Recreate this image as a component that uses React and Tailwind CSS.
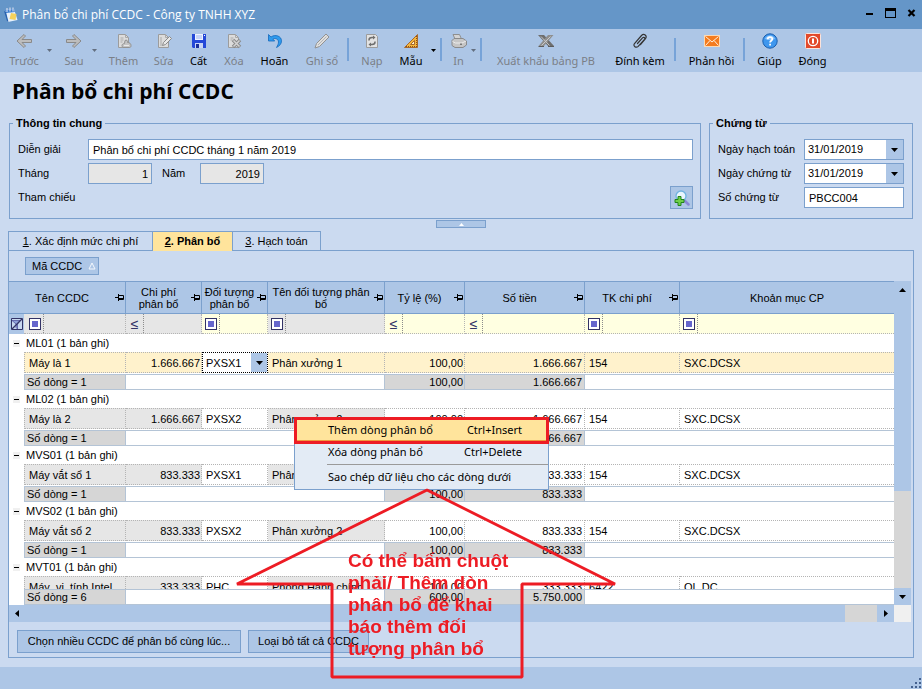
import { Fragment } from 'react';

const COLUMNS = [
  { label: 'Tên CCDC', pin: true },
  { label: 'Chi phí phân bổ', pin: true },
  { label: 'Đối tượng phân bổ', pin: true },
  { label: 'Tên đối tượng phân bổ', pin: true },
  { label: 'Tỷ lệ (%)', pin: true },
  { label: 'Số tiền', pin: true },
  { label: 'TK chi phí', pin: true },
  { label: 'Khoản mục CP', pin: false },
];

// Read-only columns have a grey filter cell, editable ones a yellow one.
const FILTERS = [
  { kind: 'text', locked: true },
  { kind: 'number', locked: true },
  { kind: 'text', locked: false },
  { kind: 'text', locked: true },
  { kind: 'number', locked: false },
  { kind: 'number', locked: false },
  { kind: 'text', locked: false },
  { kind: 'text', locked: false },
];

const GROUPS = [
  { code: 'ML01', name: 'Máy là 1', amount: '1.666.667', target: 'PXSX1', targetName: 'Phân xưởng 1', account: '154', item: 'SXC.DCSX', active: true },
  { code: 'ML02', name: 'Máy là 2', amount: '1.666.667', target: 'PXSX2', targetName: 'Phân xưởng 2', account: '154', item: 'SXC.DCSX' },
  { code: 'MVS01', name: 'Máy vắt sổ 1', amount: '833.333', target: 'PXSX1', targetName: 'Phân xưởng 1', account: '154', item: 'SXC.DCSX' },
  { code: 'MVS02', name: 'Máy vắt sổ 2', amount: '833.333', target: 'PXSX2', targetName: 'Phân xưởng 2', account: '154', item: 'SXC.DCSX' },
  { code: 'MVT01', name: 'Máy  vi  tính Intel', amount: '333.333', target: 'PHC', targetName: 'Phòng Hành chính', account: '6422', item: 'QL.DC' },
];

function Caret({ className = '' }) {
  return (
    <svg className={className} width="7" height="4" viewBox="0 0 7 4" fill="currentColor" aria-hidden="true">
      <path d="M0 0h7L3.5 4z" />
    </svg>
  );
}

function Icon({ children }) {
  return (
    <svg width="16" height="16" viewBox="0 0 16 16" fill="none" aria-hidden="true">
      {children}
    </svg>
  );
}

function PageShape() {
  return <path d="M2.5 1.5h7l3 3v10h-10z" fill="#dcdcdc" stroke="#9c9c9c" />;
}

const ICONS = {
  back: (
    <path d="M8 1.500 1 8l7 6.500 1.500-1.500L6 9.500h9.500v-3H6l3.500-3.500z" fill="#bdbdbd" stroke="#8a8a8a" strokeLinejoin="round" />
  ),
  forward: (
    <path d="M8 1.500l7 6.500-7 6.500-1.500-1.500L10 9.500H.5v-3H10L6.500 3z" fill="#bdbdbd" stroke="#8a8a8a" strokeLinejoin="round" />
  ),
  add: (
    <>
      <PageShape />
      <path d="M9.500 1.500v3h3M4.500 5h3M4.500 7h3M4.500 9h2" stroke="#aaa" />
      <path d="M9 7.500c1.500-1 3 0 2.500 2 2 0 3.500 1 3.500 3s-1 2-2 2H8c-1.500 0-2-1-2-2s1-2 2.500-2z" fill="#c4c4c4" stroke="#929292" strokeLinejoin="round" />
      <path d="M8 12.500h5" stroke="#e8e8e8" />
    </>
  ),
  edit: (
    <>
      <PageShape />
      <path d="M9.500 1.500v3h3M5 4v9" stroke="#aaa" />
      <path d="M6.500 12.500l1-3L13.500 3.500l2 2-6 6z" fill="#e8e8e8" stroke="#8a8a8a" strokeLinejoin="round" />
    </>
  ),
  save: (
    <>
      <path d="M1 1h14v14H2l-1-1z" fill="#2448d8" />
      <path d="M4 1h8v6H4z" fill="#eef2ff" />
      <path d="M5 3h6M5 5h6" stroke="#9db4f0" />
      <path d="M4 10h8v5H4z" fill="#c9d4f5" />
      <path d="M5 11h3v4H5z" fill="#1a2f9c" />
      <path d="M13 2h1v1h-1z" fill="#fff" />
    </>
  ),
  remove: (
    <>
      <PageShape />
      <path d="M9.500 1.500v3h3M4.500 5h3M4.500 7h2" stroke="#aaa" />
      <path d="M7 7l7 7M14 7l-7 7" stroke="#8a8a8a" strokeWidth="3.500" />
      <path d="M7.500 7.500l6 6M13.500 7.500l-6 6" stroke="#d4d4d4" strokeWidth="1.500" />
    </>
  ),
  undo: (
    <path
      d="M1.500 1.500v6.500h6.200L5.800 6C8.500 4.700 11.500 6.200 11.500 9c0 1.700-.8 3.500-2 5.500 3-1.500 5-3.500 5-6.700C14.500 3.300 8.500.8 4 4z"
      fill="#2f9bee"
      stroke="#1468bb"
      strokeWidth=".8"
      strokeLinejoin="round"
    />
  ),
  pencil: (
    <>
      <path d="M1 15l1.500-4.500L12 1l3 3-9.500 9.500z" fill="#dedede" stroke="#929292" strokeLinejoin="round" />
      <path d="M4 12l8.500-8.500" stroke="#b4b4b4" />
    </>
  ),
  reload: (
    <>
      <path d="M2.500 1.500h9l2 2v11h-11z" fill="#e2e2e2" stroke="#9c9c9c" />
      <path d="M5 7.500V7c0-1.500 1.300-2.500 3-2.500h1.500M11 8.500V9c0 1.500-1.300 2.500-3 2.500H6.500" stroke="#6e6e6e" strokeWidth="1.500" />
      <path d="M9 2.500l2.500 2L9 6.500zM7 9.500l-2.500 2 2.500 2z" fill="#6e6e6e" />
    </>
  ),
  template: (
    <>
      <path d="M14.500 1.500v13H1.500z" fill="#f6b63c" stroke="#a8682a" strokeLinejoin="round" />
      <path d="M11.500 7.500v4h-4z" fill="#fff3d0" stroke="#a8682a" />
      <path d="M3 13.500h11" stroke="#8a4e16" strokeDasharray="1 1" />
      <path d="M13.500 3v11" stroke="#8a4e16" strokeDasharray="1 1" />
    </>
  ),
  print: (
    <>
      <path d="M2 1.500h6.500l2 4.500H4z" fill="#d4d4d4" stroke="#8f8f8f" strokeLinejoin="round" />
      <path d="M1 7.500l2-2h9l3.500 2.500v4L12 14.500H4l-3-2z" fill="#c6c6c6" stroke="#8a8a8a" strokeLinejoin="round" />
      <path d="M1.500 8.500l3 1.500h6.500l4-2" stroke="#ececec" />
      <path d="M9 10.500h2v1.500H9z" fill="#7a7a7a" />
    </>
  ),
  excel: (
    <>
      <path d="M0 2h6l10 11h-6z" fill="#6e6e6e" />
      <path d="M10 2h5.500L6 13H.5z" fill="#8f8f8f" />
      <path d="M3 3.500l8.500 9M12.500 3.500L3.500 12.500" stroke="#c9c9c9" />
      <path d="M.5 13.500H6M10 13.500h6" stroke="#5c5c5c" />
    </>
  ),
  clip: (
    <path
      d="M5.500 10.500l5-5.700c1.300-1.300 3 .2 2 1.500l-6.300 7c-2.200 2.200-5.400-.3-3.700-2.800L9.500 2.500c2.500-2.600 6 .3 4 3.200L8.500 11.500"
      stroke="#333"
      strokeWidth="1.200"
      strokeLinecap="round"
    />
  ),
  mail: (
    <>
      <path d="M0 2h16v12H0z" fill="#fbd9b4" />
      <path d="M1 3h14v10H1z" fill="#f47b1e" />
      <path d="M1.500 3.500L8 9l6.500-5.500M1.500 12.500l4.500-5M14.500 12.500l-4.500-5" stroke="#fff0dd" />
    </>
  ),
  help: (
    <>
      <circle cx="8" cy="8" r="7.200" fill="#3f97ee" stroke="#1b5fae" />
      <path d="M3 6a5.300 5.300 0 0110 0c-3 1.500-7 1.500-10 0z" fill="#8cc4fa" />
      <path d="M5.700 6.200C5.700 3.400 10.300 3.500 10.300 6c0 1.700-2.200 1.700-2.200 3.500" stroke="#fff" strokeWidth="1.800" />
      <path d="M7.200 10.800H9v1.800H7.200z" fill="#fff" />
    </>
  ),
  power: (
    <>
      <rect x=".5" y=".5" width="15" height="15" rx="1" fill="#e2492b" stroke="#fbe3dc" />
      <circle cx="8" cy="8" r="4.700" stroke="#fff" strokeWidth="1.300" />
      <path d="M8 5.500v5" stroke="#fff" strokeWidth="2" />
    </>
  ),
};

function ToolButton({ icon, label, width, disabled }) {
  return (
    <button
      type="button"
      disabled={disabled}
      className={`flex shrink-0 flex-col items-center gap-1 whitespace-nowrap leading-4 ${width} ${
        disabled ? 'text-[#7b7f86]' : 'text-black'
      }`}
    >
      <Icon>{ICONS[icon]}</Icon>
      {label}
    </button>
  );
}

function ToolCaret({ label, disabled }) {
  return (
    <button
      type="button"
      aria-label={label}
      disabled={disabled}
      className={`w-[9px] shrink-0 self-stretch pb-1 ${disabled ? 'text-[#636f80]' : 'text-black'}`}
    >
      <svg width="5" height="3" viewBox="0 0 5 3" fill="currentColor" aria-hidden="true">
        <path d="M0 0h5L2.500 3z" />
      </svg>
    </button>
  );
}

function Separator() {
  return <div className="mr-1 mt-[5px] h-[23px] w-[2px] shrink-0 bg-[#77a3d8]" />;
}

function Toolbar() {
  return (
    <div className="flex h-[43px] shrink-0 items-start overflow-hidden bg-[#adc6e6] pl-px pt-1 font-['Noto_Sans',sans-serif] text-[11px]">
      <ToolButton icon="back" label="Trước" width="w-[46px]" disabled />
      <ToolCaret label="Chọn bản ghi trước" disabled />
      <ToolButton icon="forward" label="Sau" width="w-[36px]" disabled />
      <ToolCaret label="Chọn bản ghi sau" disabled />
      <ToolButton icon="add" label="Thêm" width="w-[45px]" disabled />
      <ToolButton icon="edit" label="Sửa" width="w-[35px]" disabled />
      <ToolButton icon="save" label="Cất" width="w-[35px]" />
      <ToolButton icon="remove" label="Xóa" width="w-[36px]" disabled />
      <ToolButton icon="undo" label="Hoãn" width="w-[45px]" />
      <ToolButton icon="pencil" label="Ghi sổ" width="w-[50px]" disabled />
      <Separator />
      <ToolButton icon="reload" label="Nạp" width="w-[38px]" disabled />
      <ToolButton icon="template" label="Mẫu" width="w-[40px]" />
      <ToolCaret label="Chọn mẫu" />
      <Separator />
      <ToolButton icon="print" label="In" width="w-[25px]" disabled />
      <ToolCaret label="Chọn mẫu in" disabled />
      <Separator />
      <ToolButton icon="excel" label="Xuất khẩu bảng PB" width="w-[120px]" disabled />
      <ToolButton icon="clip" label="Đính kèm" width="w-[68px]" />
      <Separator />
      <ToolButton icon="mail" label="Phản hồi" width="w-[63px]" />
      <Separator />
      <ToolButton icon="help" label="Giúp" width="w-[41px]" />
      <ToolButton icon="power" label="Đóng" width="w-[45px]" />
    </div>
  );
}

function TitleBar() {
  return (
    <header className="flex h-[29px] shrink-0 items-center bg-[#6596c8] px-1 font-['Open_Sans',sans-serif] text-xs text-white">
      <svg width="14" height="16" viewBox="0 0 14 16" aria-hidden="true">
        <path d="M1 3l9-1 3.500 11L4 15z" fill="#e8f1fb" />
        <path d="M1 3l9-1 .8 3L2 6z" fill="#3c7fd0" />
        <path d="M0 4l3 10 1.500 1L2 5z" fill="#2a62ae" />
        <path d="M7 6l5.500 1-1 6-6-1z" fill="#f5d25c" />
        <path d="M3 1v4M6 .5v4M9 .5v4" stroke="#e8e8f5" strokeWidth="1" />
      </svg>
      <span className="ml-1 flex-1">Phân bổ chi phí CCDC - Công ty TNHH XYZ</span>
      <div className="flex items-center gap-[11px] pb-1 pr-[2px] text-black">
        <button type="button" aria-label="Thu nhỏ">
          <svg width="8" height="12" viewBox="0 0 8 12" aria-hidden="true">
            <path d="M0 6h7v2H0z" />
          </svg>
        </button>
        <button type="button" aria-label="Phóng to">
          <svg width="11" height="10" viewBox="0 0 11 10" aria-hidden="true">
            <path d="M0 0h11v10H0zM1 3v6h9V3z" fillRule="evenodd" />
          </svg>
        </button>
        <button type="button" aria-label="Đóng cửa sổ">
          <svg width="9" height="8" viewBox="0 0 9 8" aria-hidden="true">
            <path d="M1.500 1l6 6M7.500 1l-6 6" stroke="currentColor" strokeWidth="2.200" />
          </svg>
        </button>
      </div>
    </header>
  );
}

function DateField({ id, label }) {
  return (
    <>
      <label htmlFor={id}>{label}</label>
      <div className="flex h-[21px] border border-[#7ba0cd] bg-white">
        <input id={id} type="text" defaultValue="31/01/2019" className="w-0 min-w-0 flex-1 pl-[3px]" />
        <button type="button" aria-label={`Chọn ${label}`} className="flex w-[17px] items-center justify-center bg-[#adc6e6]">
          <Caret />
        </button>
      </div>
    </>
  );
}

function VoucherForm() {
  return (
    <div className="flex shrink-0 gap-2 px-[9px]">
      <fieldset className="min-w-0 flex-1 border border-[#7ba0cd] pb-[10px] pl-2 pr-[7px]">
        <legend className="ml-[-5px] px-[3px] font-bold leading-[14px]">Thông tin chung</legend>
        <div className="flex flex-col gap-[3px] pt-[9px]">
          <div className="flex items-center">
            <label htmlFor="description" className="w-[70px]">Diễn giải</label>
            <input
              id="description"
              type="text"
              defaultValue="Phân bổ chi phí CCDC tháng 1 năm 2019"
              className="h-[21px] min-w-0 flex-1 border border-[#7ba0cd] bg-white px-1"
            />
          </div>
          <div className="flex items-center">
            <label htmlFor="month" className="w-[70px]">Tháng</label>
            <input id="month" type="text" readOnly value="1" className="h-[21px] w-16 border border-[#7ba0cd] bg-[#e6e6e6] px-[3px] text-right" />
            <label htmlFor="year" className="w-12 pl-[10px]">Năm</label>
            <input id="year" type="text" readOnly value="2019" className="h-[21px] w-16 border border-[#7ba0cd] bg-[#e6e6e6] px-[3px] text-right" />
          </div>
          <div className="flex h-[21px] items-center justify-between">
            <span>Tham chiếu</span>
            <button type="button" aria-label="Thêm tham chiếu" className="flex h-[23px] w-[23px] items-center justify-center border border-[#7ba0cd] bg-[#adc6e6]">
              <Icon>
                <path d="M10.500 10.500l4 4" stroke="#8a86d6" strokeWidth="2.500" strokeLinecap="round" />
                <circle cx="7" cy="6" r="5" fill="#e9f5fd" stroke="#6fb3e0" strokeWidth="1.300" />
                <path d="M4 6.500h3v3h3v3H7v3H4v-3H1v-3h3z" fill="#6fd04a" stroke="#23841c" strokeLinejoin="round" />
              </Icon>
            </button>
          </div>
        </div>
      </fieldset>
      <fieldset className="w-[204px] border border-[#7ba0cd] px-2 pb-[10px]">
        <legend className="ml-[-5px] px-[3px] font-bold leading-[14px]">Chứng từ</legend>
        <div className="grid grid-cols-[86px_1fr] items-center gap-y-[3px] pt-[9px]">
          <DateField id="posted-date" label="Ngày hạch toán" />
          <DateField id="voucher-date" label="Ngày chứng từ" />
          <label htmlFor="voucher-no">Số chứng từ</label>
          <input id="voucher-no" type="text" defaultValue="PBCC004" className="h-[21px] w-full min-w-0 border border-[#7ba0cd] bg-white px-1" />
        </div>
      </fieldset>
    </div>
  );
}

function Pin() {
  return (
    <svg width="10" height="7" viewBox="0 0 10 7" fill="none" stroke="#000" className="shrink-0" aria-hidden="true">
      <path d="M0 3.500h3M3.500 0v7M4 1.500h4.500v4H4M4 4.500h4" />
    </svg>
  );
}

function FilterCell({ filter, label, indent }) {
  return (
    <td
      className={`h-5 border-b border-r border-dotted border-[#b4b4b4] last:border-r-0 ${
        filter.locked ? 'bg-[#e6e6e6]' : 'bg-[#ffffe1]'
      } ${indent ? 'pl-[2px]' : ''}`}
    >
      <button
        type="button"
        aria-label={`Điều kiện lọc ${label}`}
        className="flex h-[19px] w-[18px] items-center justify-center border-r border-dotted border-[#8c8c8c]"
      >
        {filter.kind === 'number' ? (
          <span className="text-sm leading-none text-[#333366]">≤</span>
        ) : (
          <span className="flex h-3 w-3 items-center justify-center border border-[#333366] bg-white">
            <span className="h-[6px] w-[6px] bg-[#6666cc]" />
          </span>
        )}
      </button>
    </td>
  );
}

const CELL = 'h-[21px] overflow-hidden whitespace-pre border-y border-r border-dotted border-[#b4b4b4] align-middle last:border-r-0';
const SUMMARY = 'h-4 border-y border-r border-[#b4c4d6] align-middle';

function GroupRows({ group }) {
  const locked = group.active ? 'bg-[#fff2cc]' : 'bg-[#e6e6e6]';
  const open = group.active ? 'bg-[#fff2cc]' : 'bg-white';
  return (
    <>
      <tr>
        <td colSpan={9} className="h-[18px] align-middle">
          <div className="flex items-center">
            <button type="button" aria-label={`Thu gọn ${group.code}`} className="ml-1 flex h-[7px] w-[7px] items-center justify-center bg-[#f0f0f0]">
              <span className="h-px w-[5px] bg-black" />
            </button>
            <span className="ml-[6px]">{group.code} (1 bản ghi)</span>
          </div>
        </td>
      </tr>
      <tr>
        <td />
        <td className={`${CELL} border-l pl-1 ${locked}`}>{group.name}</td>
        <td className={`${CELL} pr-px text-right ${locked}`}>{group.amount}</td>
        {group.active ? (
          <td className="h-[21px] border border-dotted border-black bg-white">
            <div className="relative flex h-[19px]">
              <select aria-label="Đối tượng phân bổ" defaultValue="PXSX1" className="w-full appearance-none pl-[3px] outline-none">
                <option>PXSX1</option>
                <option>PXSX2</option>
                <option>PHC</option>
              </select>
              <span className="pointer-events-none absolute inset-y-0 right-0 flex w-4 items-center justify-center bg-[#adc6e6]">
                <Caret />
              </span>
            </div>
          </td>
        ) : (
          <td className={`${CELL} pl-1 ${open}`}>{group.target}</td>
        )}
        <td className={`${CELL} pl-1 ${locked}`}>{group.targetName}</td>
        <td className={`${CELL} pr-px text-right ${open}`}>100,00</td>
        <td className={`${CELL} pr-[2px] text-right ${open}`}>{group.amount}</td>
        <td className={`${CELL} pl-1 ${open}`}>{group.account}</td>
        <td className={`${CELL} pl-1 ${open}`}>{group.item}</td>
      </tr>
      <tr>
        <td colSpan={9} className="h-px" />
      </tr>
      <SummaryRow count={1} rate="100,00" amount={group.amount} />
    </>
  );
}

function SummaryRow({ count, rate, amount }) {
  return (
    <tr className="bg-white">
      <td />
      <td className={`${SUMMARY} border-l bg-[#d6d6d6] pl-[2px]`}>Số dòng = {count}</td>
      <td colSpan={3} className={SUMMARY} />
      <td className={`${SUMMARY} bg-[#d6d6d6] pr-px text-right`}>{rate}</td>
      <td className={`${SUMMARY} bg-[#d6d6d6] pr-[2px] text-right`}>{amount}</td>
      <td colSpan={2} className="h-4 border-y border-[#b4c4d6]" />
    </tr>
  );
}

function AllocationTable() {
  return (
    <div className="min-h-0 min-w-0 flex-1 overflow-hidden bg-white">
      <table className="w-full table-fixed border-separate border-spacing-0 leading-[14px]">
        <colgroup>
          <col className="w-[15px]" />
          <col className="w-[102px]" />
          <col className="w-[76px]" />
          <col className="w-[66px]" />
          <col className="w-[117px]" />
          <col className="w-[80px]" />
          <col className="w-[120px]" />
          <col className="w-[95px]" />
          <col />
        </colgroup>
        <thead>
          <tr>
            {COLUMNS.map((column, i) => (
              <th
                key={column.label}
                colSpan={i === 0 ? 2 : 1}
                className={`h-[33px] border-y border-[#7ba0cd] bg-[#adc6e6] align-middle font-normal leading-3 ${
                  column.pin ? 'border-r' : ''
                }`}
              >
                <div className="flex items-center">
                  <span className="min-w-0 flex-1 px-[2px] text-center">{column.label}</span>
                  {column.pin && <Pin />}
                </div>
              </th>
            ))}
          </tr>
        </thead>
        <tbody>
          <tr>
            <td className="h-5 bg-[#adc6e6]">
              <button type="button" aria-label="Xóa điều kiện lọc" className="ml-[2px] flex">
                <svg width="12" height="12" viewBox="0 0 12 12" fill="none" aria-hidden="true">
                  <path d="M.5.5h11v11H.5z" fill="#c9d8ef" stroke="#333366" />
                  <path d="M1 2.500h8L6.500 6v5L5 9.500V6z" fill="#8f9fd8" stroke="#4a4a9a" strokeWidth=".7" />
                  <path d="M1 11L11 1" stroke="#333366" strokeWidth="1.300" />
                </svg>
              </button>
            </td>
            {FILTERS.map((filter, i) => (
              <FilterCell key={COLUMNS[i].label} filter={filter} label={COLUMNS[i].label} indent={i === 0} />
            ))}
          </tr>
          {GROUPS.map((group) => (
            <Fragment key={group.code}>
              <GroupRows group={group} />
            </Fragment>
          ))}
        </tbody>
        <tfoot className="sticky bottom-0">
          <SummaryRow count={6} rate="600,00" amount="5.750.000" />
        </tfoot>
      </table>
    </div>
  );
}

function Grid() {
  return (
    <div className="mr-[2px] flex min-h-0 flex-1 flex-col">
      <div className="flex min-h-0 flex-1">
        <AllocationTable />
        <div className="flex w-[17px] shrink-0 flex-col bg-[#d6d6d6]">
          <button type="button" aria-label="Cuộn lên" className="flex h-[17px] shrink-0 items-center justify-center bg-[#adc6e6]">
            <Caret className="rotate-180" />
          </button>
          <div className="flex-2 bg-[#adc6e6]" />
          <div className="flex-1" />
          <button type="button" aria-label="Cuộn xuống" className="flex h-[17px] shrink-0 items-center justify-center bg-[#adc6e6]">
            <Caret />
          </button>
        </div>
      </div>
      <div className="flex h-[17px] shrink-0">
        <button type="button" aria-label="Cuộn trái" className="flex w-4 items-center justify-center bg-[#adc6e6]">
          <svg width="4" height="7" viewBox="0 0 4 7" aria-hidden="true"><path d="M4 0v7L0 3.500z" /></svg>
        </button>
        <div className="flex-1 bg-[#adc6e6]" />
        <div className="w-8 bg-[#d6d6d6]" />
        <button type="button" aria-label="Cuộn phải" className="flex w-[17px] items-center justify-center bg-[#adc6e6]">
          <svg width="4" height="7" viewBox="0 0 4 7" aria-hidden="true"><path d="M0 0v7l4-3.500z" /></svg>
        </button>
        <div className="w-[17px] bg-[#f0f0f0]" />
      </div>
    </div>
  );
}

function Tabs() {
  return (
    <div role="tablist" className="flex h-[19px] shrink-0 items-stretch pl-2">
      <button type="button" role="tab" aria-selected="false" className="w-36 border-l border-t border-[#7ba0cd]">
        <u>1</u>. Xác định mức chi phí
      </button>
      <button type="button" role="tab" aria-selected="true" className="relative -mb-px w-20 border-l border-t border-[#7ba0cd] bg-[#ffe49c] font-bold">
        <u>2</u>. Phân bổ
      </button>
      <button type="button" role="tab" aria-selected="false" className="w-[89px] border-x border-t border-[#7ba0cd]">
        <u>3</u>. Hạch toán
      </button>
    </div>
  );
}

function ContextMenu() {
  return (
    <div role="menu" className="absolute left-[294px] top-[417px] w-[255px] font-['Noto_Sans',sans-serif] text-[11px] leading-4">
      <button
        type="button"
        role="menuitem"
        className="flex h-[27px] w-full items-center justify-between border-3 border-[#ed1c24] bg-[#ffe49c] pb-px pl-[31px] pr-6 shadow-[inset_0_-1px_0_#f0983c]"
      >
        <span>Thêm dòng phân bổ</span>
        <span>Ctrl+Insert</span>
      </button>
      <div className="border-x border-b border-[#7ba0cd] bg-[#e3ebf5]">
        <button type="button" role="menuitem" className="flex h-5 w-full items-start justify-between pl-[33px] pr-[26px]">
          <span>Xóa dòng phân bổ</span>
          <span>Ctrl+Delete</span>
        </button>
        <div className="ml-8 h-px bg-[#9a9a9a]" />
        <button type="button" role="menuitem" className="flex h-6 w-full items-center whitespace-nowrap pl-[33px]">
          Sao chép dữ liệu cho các dòng dưới
        </button>
      </div>
    </div>
  );
}

function Callout() {
  return (
    <div className="pointer-events-none absolute left-[232px] top-[486px]">
      <svg width="390" height="196" viewBox="0 0 390 196" fill="none" aria-hidden="true">
        <path d="M195 4L5 98h95v93h190V98h93z" stroke="#ed1c24" strokeWidth="3" strokeLinejoin="bevel" />
      </svg>
      <p className="absolute left-[116px] top-[64px] w-[172px] text-[19px] font-bold leading-[22px] text-[#ed1c24]">
        Có thể bấm chuột phải/ Thêm dòn phân bổ để khai báo thêm đối tượng phân bổ
      </p>
    </div>
  );
}

export default function App() {
  return (
    <div className="relative flex h-screen flex-col overflow-hidden bg-[#cbdaf0] font-['Liberation_Sans',sans-serif] text-[11px] text-black">
      <TitleBar />
      <Toolbar />
      <h1 className="h-11 shrink-0 pl-3 pt-[5px] font-['Open_Sans',sans-serif] text-[21px] font-bold leading-7">
        Phân bổ chi phí CCDC
      </h1>
      <VoucherForm />
      <button type="button" aria-label="Thu gọn thông tin chung" className="mb-[3px] mt-px flex h-2 w-[50px] shrink-0 items-center justify-center self-center border border-[#7ba0cd] bg-[#adc6e6] text-white">
        <svg width="5" height="3" viewBox="0 0 5 3" fill="currentColor" aria-hidden="true"><path d="M0 3h5L2.500 0z" /></svg>
      </button>
      <Tabs />
      <main className="mx-2 mb-[9px] flex min-h-0 flex-1 flex-col border border-[#7ba0cd] pt-[6px]">
        <div className="mb-[6px] pl-4">
          <button type="button" className="flex h-[18px] items-center gap-[6px] border border-[#7ba0cd] bg-[#adc6e6] pl-[6px] pr-[2px]">
            Mã CCDC
            <svg width="8" height="8" viewBox="0 0 8 8" fill="none" aria-hidden="true"><path d="M4 1L1 7h6z" stroke="#f4f8fd" /></svg>
          </button>
        </div>
        <Grid />
        <div className="flex shrink-0 gap-[7px] pb-1 pl-2 pt-2">
          <button type="button" className="h-[23px] w-[224px] border border-[#7ba0cd] bg-[#adc6e6]">
            Chọn nhiều CCDC để phân bổ cùng lúc...
          </button>
          <button type="button" className="h-[23px] w-[121px] border border-[#7ba0cd] bg-[#adc6e6]">
            Loại bỏ tất cả CCDC
          </button>
        </div>
      </main>
      <footer className="flex h-[22px] shrink-0 items-end justify-end bg-[#adc6e6]">
        <svg width="11" height="11" viewBox="0 0 11 11" fill="#44618f" aria-hidden="true">
          <path d="M8 0h2v2H8zM8 4h2v2H8zM4 4h2v2H4zM8 8h2v2H8zM4 8h2v2H4zM0 8h2v2H0z" />
        </svg>
      </footer>
      <ContextMenu />
      <Callout />
    </div>
  );
}
